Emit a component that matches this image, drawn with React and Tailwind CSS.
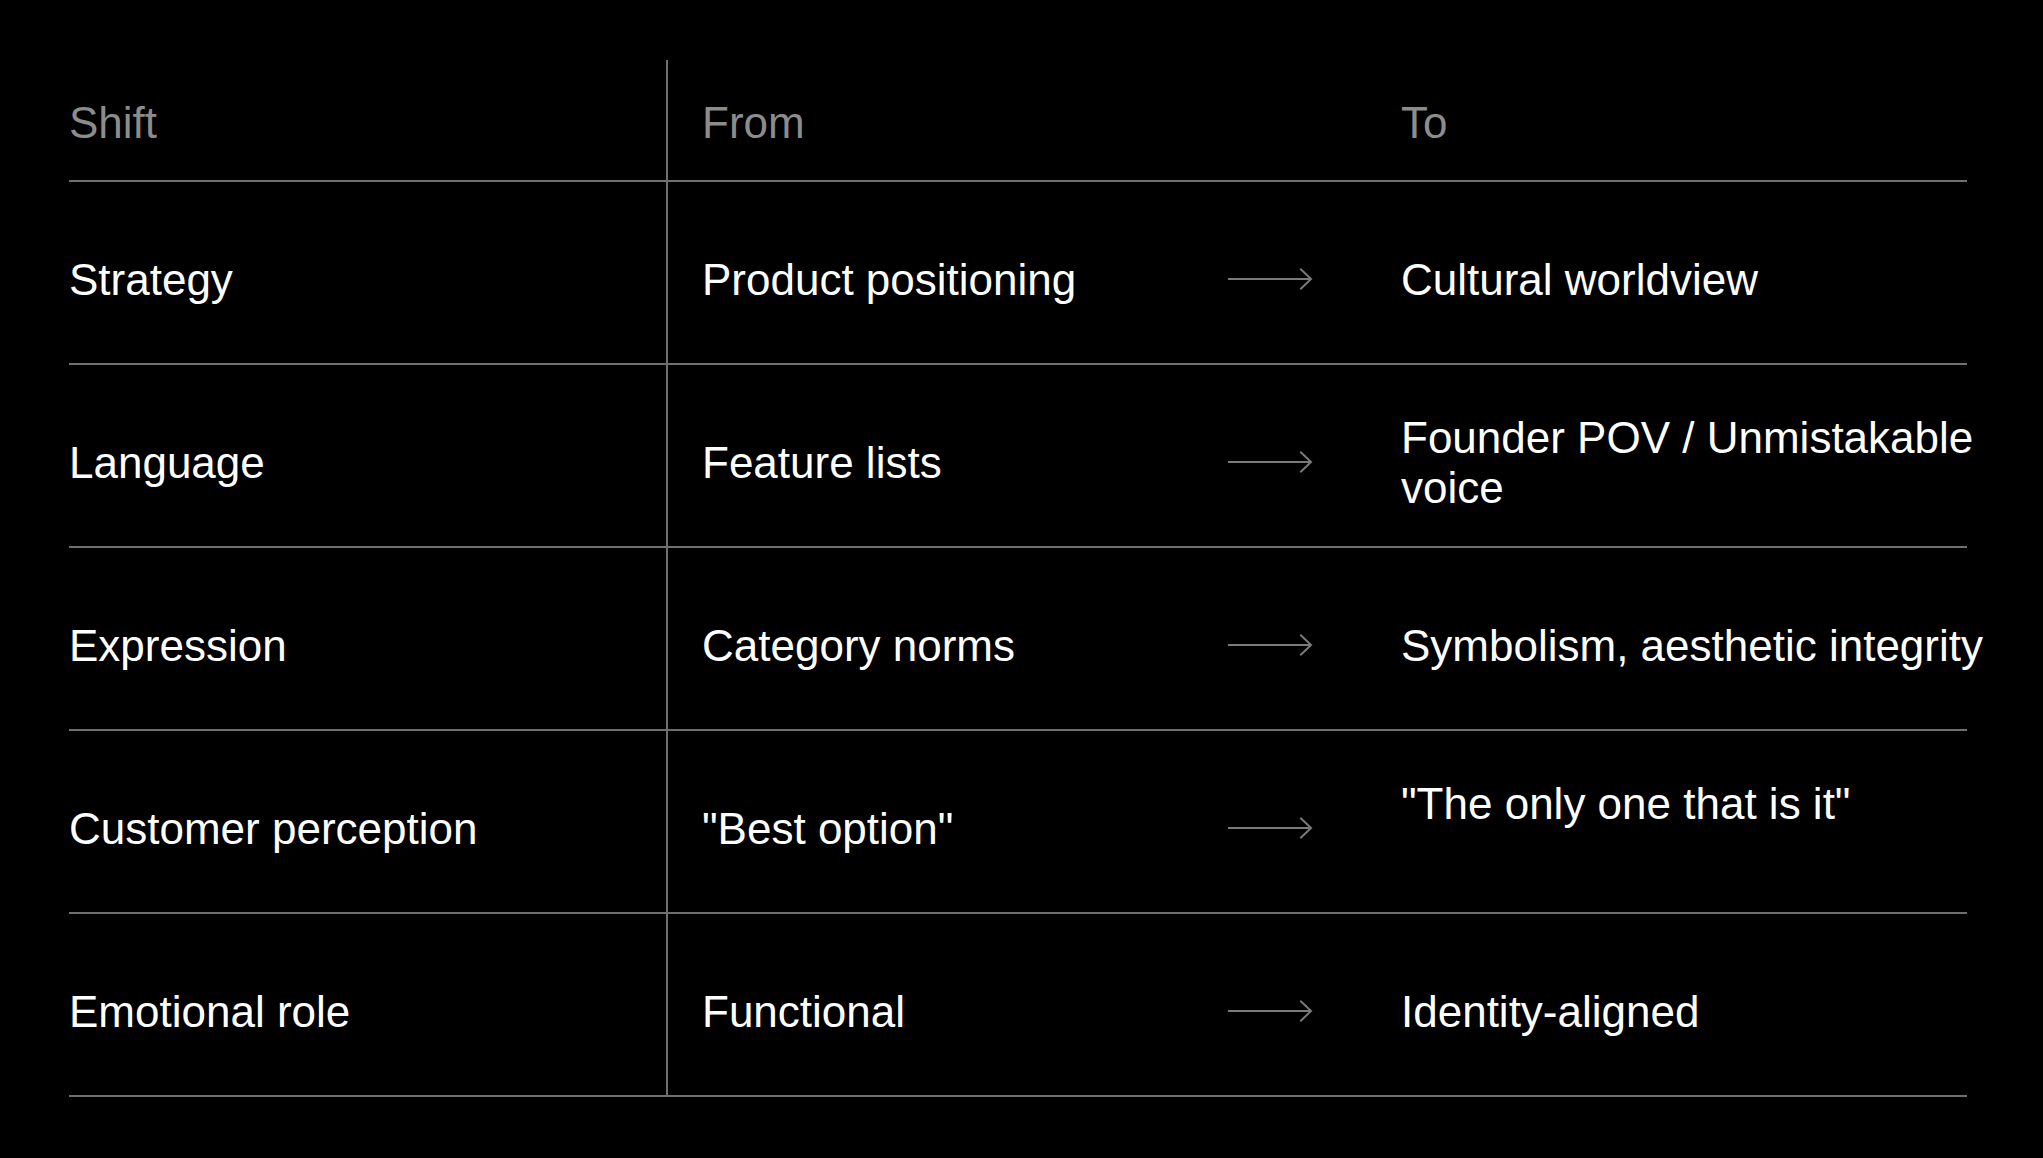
const rows = [
  { shift: "Strategy", from: "Product positioning", to: "Cultural worldview" },
  { shift: "Language", from: "Feature lists", to: "Founder POV / Unmistakable voice" },
  { shift: "Expression", from: "Category norms", to: "Symbolism, aesthetic integrity" },
  { shift: "Customer perception", from: "\"Best option\"", to: "\"The only one that is it\"", padLine: true },
  { shift: "Emotional role", from: "Functional", to: "Identity-aligned" },
];

function Arrow() {
  return (
    <svg width="88" height="24" viewBox="0 0 88 24" fill="none" className="block">
      <path d="M1 12 H86" stroke="#7a7a7a" strokeWidth="2" />
      <path d="M75 1.5 L86 12 L75 22.5" stroke="#7a7a7a" strokeWidth="2" />
    </svg>
  );
}

export default function App() {
  return (
    <div
      className="min-h-screen bg-black pl-[69px] pt-[60px] text-[44px] leading-[1.13]"
      style={{ fontFamily: '"Liberation Sans", Arial, sans-serif' }}
    >
      <div className="w-[1898px]">
        {/* header */}
        <div className="flex h-[122px] border-b-2 border-[#6f6f6f] text-[#8c8c8c]">
          <div className="flex w-[599px] shrink-0 items-center border-r-2 border-[#6f6f6f] pt-[6px]">
            Shift
          </div>
          <div className="flex w-[559px] shrink-0 items-center pl-[34px] pt-[6px]">From</div>
          <div className="w-[86px] shrink-0" />
          <div className="flex w-[88px] shrink-0" />
          <div className="flex w-[600px] shrink-0 items-center pt-[6px]">To</div>
        </div>

        {/* rows */}
        {rows.map((r) => (
          <div key={r.shift} className="flex h-[183px] border-b-2 border-[#6f6f6f] text-white">
            <div className="flex w-[599px] shrink-0 items-center border-r-2 border-[#6f6f6f] pt-[14px]">
              {r.shift}
            </div>
            <div className="flex w-[559px] shrink-0 items-center pl-[34px] pt-[14px]">{r.from}</div>
            <div className="flex w-[86px] shrink-0 items-center pt-[12px]">
              <Arrow />
            </div>
            <div className="w-[88px] shrink-0" />
            <div className="flex w-[600px] shrink-0 items-center pt-[14px]">
              <div>
                {r.to}
                {r.padLine && (
                  <>
                    <br />
                    &nbsp;
                  </>
                )}
              </div>
            </div>
          </div>
        ))}
      </div>
    </div>
  );
}
